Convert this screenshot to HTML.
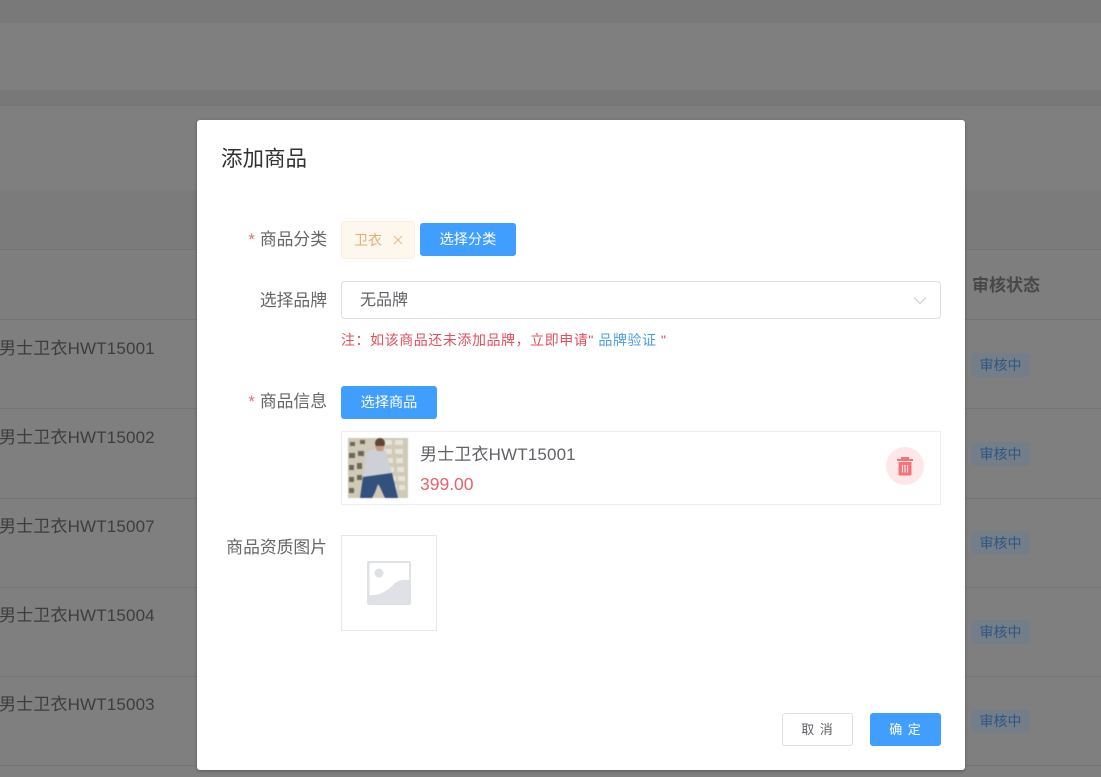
<!DOCTYPE html>
<html lang="zh">
<head>
<meta charset="utf-8">
<style>
*{box-sizing:border-box}
html,body{margin:0;padding:0}
body{width:1101px;height:777px;position:relative;overflow:hidden;background:#7f7f7f;font-family:"Liberation Sans","Noto Sans CJK SC",sans-serif;color:#606266}
.a{position:absolute;white-space:nowrap}
.band{position:absolute;left:0;width:1101px}
.line{position:absolute;left:0;width:1101px;height:1px;background:#747474}
.pname{position:absolute;left:-1px;font-size:17px;letter-spacing:.15px;line-height:24px;color:#3d3d3d;white-space:nowrap}
.st{position:absolute;left:971px;width:59px;height:24px;background:#747e88;border-radius:4px;color:#2e5682;font-size:14px;line-height:24px;text-align:center}
.modal{position:absolute;left:197px;top:120px;width:768px;height:650px;background:#fff;border-radius:3px;box-shadow:0 1px 3px rgba(0,0,0,.3)}
.lb{position:absolute;font-size:16.8px;line-height:22px;color:#666;white-space:nowrap;text-align:right;right:638px}
.lb i{font-style:normal;color:#e4707c;margin-right:5px}
.btn{position:absolute;height:33px;background:#409eff;border-radius:3px;color:#fff;font-size:13px;line-height:33px;text-align:center;white-space:nowrap}
.b14{font-size:14.200px;line-height:35px}
</style>
</head>
<body>
<div class="band" style="top:0;height:23px;background:#797979"></div>
<div class="band" style="top:23px;height:67px;background:#7f7f7f"></div>
<div class="band" style="top:90px;height:15px;background:#787878"></div>
<div class="band" style="top:105px;height:1px;background:#757575"></div>
<div class="band" style="top:106px;height:84px;background:#7f7f7f"></div>
<div class="band" style="top:190px;height:60px;background:#7b7b7b"></div>
<div class="line" style="top:249px"></div>
<div class="band" style="top:250px;height:69px;background:#7e7e7e"></div>
<div class="line" style="top:319px"></div>
<div class="line" style="top:408px"></div>
<div class="line" style="top:498px"></div>
<div class="line" style="top:587px"></div>
<div class="line" style="top:676px"></div>
<div class="line" style="top:765px"></div>

<div class="pname" style="top:337px">男士卫衣HWT15001</div>
<div class="pname" style="top:426px">男士卫衣HWT15002</div>
<div class="pname" style="top:515px">男士卫衣HWT15007</div>
<div class="pname" style="top:604px">男士卫衣HWT15004</div>
<div class="pname" style="top:693px">男士卫衣HWT15003</div>

<div class="a" style="left:972px;top:274px;font-size:17px;line-height:24px;font-weight:bold;color:#484848">审核状态</div>
<div class="st" style="top:353px">审核中</div>
<div class="st" style="top:442px">审核中</div>
<div class="st" style="top:531px">审核中</div>
<div class="st" style="top:620px">审核中</div>
<div class="st" style="top:709px">审核中</div>

<div class="modal">
  <div class="a" style="left:24px;top:24px;font-size:21.500px;line-height:30px;color:#303133">添加商品</div>

  <div class="lb" style="top:109px"><i>*</i>商品分类</div>
  <div class="a" style="left:144px;top:101px;width:74px;height:38px;background:#fdf7ee;border:1px solid #f9efdf;border-radius:4px;color:#e3b071;font-size:14px;line-height:36px;padding-left:12px">卫衣
    <svg style="position:absolute;left:51px;top:13px" width="10" height="10" viewBox="0 0 10 10"><path d="M1 1L9 9M9 1L1 9" stroke="#e3bd8c" stroke-width="1" fill="none"/></svg>
  </div>
  <div class="btn b14" style="left:223px;top:103px;width:96px">选择分类</div>

  <div class="lb" style="top:170px">选择品牌</div>
  <div class="a" style="left:144px;top:161px;width:600px;height:38px;border:1px solid #dcdfe6;border-radius:4px;font-size:16px;line-height:37px;padding-left:18px;color:#606266">无品牌
    <svg style="position:absolute;right:12px;top:14px" width="16" height="10" viewBox="0 0 16 10"><path d="M2 1.500L8 7.500L14 1.500" stroke="#c8ccd3" stroke-width="1.100" fill="none"/></svg>
  </div>
  <div class="a" style="left:144px;top:210px;font-size:14px;line-height:20px;letter-spacing:.55px;color:#e2505c">注：如该商品还未添加品牌，立即申请" <span style="color:#4a9be8">品牌验证</span> "</div>

  <div class="lb" style="top:271px"><i>*</i>商品信息</div>
  <div class="btn b14" style="left:144px;top:266px;width:96px">选择商品</div>

  <div class="a" style="left:144px;top:311px;width:600px;height:74px;border:1px solid #ebeef5">
    <svg style="position:absolute;left:6px;top:6px;filter:blur(.5px)" width="60" height="60" viewBox="0 0 60 60">
      <rect width="60" height="60" fill="#cfc9b8"/>
      <g fill="#e6e3d8">
        <rect x="36" y="2" width="8" height="5"/><rect x="47" y="2" width="8" height="5"/>
        <rect x="36" y="11" width="8" height="5"/><rect x="47" y="11" width="8" height="5"/>
        <rect x="38" y="20" width="7" height="5"/><rect x="48" y="20" width="7" height="5"/>
        <rect x="40" y="29" width="6" height="5"/><rect x="49" y="29" width="7" height="5"/>
        <rect x="42" y="38" width="6" height="5"/><rect x="50" y="38" width="7" height="5"/>
        <rect x="44" y="47" width="5" height="5"/><rect x="51" y="47" width="6" height="5"/>
      </g>
      <g fill="#6d6759">
        <rect x="2" y="4" width="5" height="4"/><rect x="12" y="2" width="5" height="4"/>
        <rect x="1" y="15" width="6" height="5"/><rect x="10" y="13" width="6" height="5"/>
        <rect x="1" y="27" width="5" height="5"/><rect x="9" y="25" width="5" height="6"/>
        <rect x="1" y="39" width="5" height="5"/><rect x="9" y="37" width="5" height="5"/>
        <rect x="1" y="50" width="5" height="5"/>
      </g>
      <path d="M18 15L28 10L38 13L44 36L15 39Z" fill="#cdd0d6"/>
      <circle cx="32" cy="5" r="5" fill="#5e4636"/>
      <path d="M27 8L36 8L35 13L29 13Z" fill="#c49a80"/>
      <path d="M15 39L44 35L50 60L37 60L31 47L24 60L12 60Z" fill="#34507c"/>
      <path d="M30 46L25 60L36 60Z" fill="#cfc9b8"/>
    </svg>
    <div class="a" style="left:78px;top:11px;font-size:17px;letter-spacing:.15px;line-height:24px;color:#606266">男士卫衣HWT15001</div>
    <div class="a" style="left:78px;top:40px;font-size:17.500px;line-height:24px;color:#e6626c">399.00</div>
    <div class="a" style="left:544px;top:15px;width:38px;height:38px;border-radius:50%;background:#fde7e9">
      <svg style="position:absolute;left:10px;top:9px" width="18" height="20" viewBox="0 0 18 20">
        <path d="M1 4H17M6 4V2H12V4" stroke="#f4747a" stroke-width="2" fill="none"/>
        <path d="M2.500 6H15.500V18.500A1 1 0 0 1 14.500 19.500H3.500A1 1 0 0 1 2.500 18.500Z" fill="#f4747a"/>
        <path d="M6.500 9V16.500M9 9V16.500M11.500 9V16.500" stroke="#fde7e9" stroke-width="1.100"/>
      </svg>
    </div>
  </div>

  <div class="lb" style="top:417px">商品资质图片</div>
  <div class="a" style="left:144px;top:415px;width:96px;height:96px;border:1px solid #e4e7ed">
    <svg style="position:absolute;left:25px;top:25px" width="44" height="44" viewBox="0 0 44 44">
      <rect width="44" height="44" rx="2" fill="#dfe1e6"/>
      <path d="M2.500 4A2 2 0 0 1 4.500 2H42V19C34 18 30 20 26 24C20 30 12 35 2.500 34Z" fill="#fff"/>
      <circle cx="12" cy="12" r="4.500" fill="#dfe1e6"/>
    </svg>
  </div>

  <div class="a" style="left:585px;top:593px;width:71px;height:33px;border:1px solid #dcdfe6;border-radius:3px;font-size:13px;line-height:31px;text-align:center;color:#606266;letter-spacing:1px">取 消</div>
  <div class="btn" style="left:673px;top:593px;width:71px;letter-spacing:1px">确 定</div>
</div>
</body>
</html>
